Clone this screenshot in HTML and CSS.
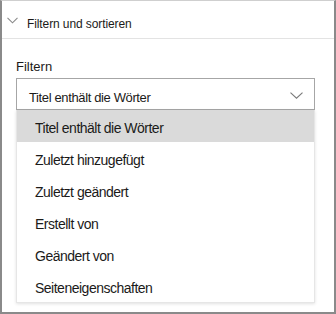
FILE: index.html
```html
<!DOCTYPE html>
<html lang="de">
<head>
  <meta charset="UTF-8" />
  <meta name="viewport" content="width=device-width, initial-scale=1" />
  <title>Filtern und sortieren</title>
  <link rel="stylesheet" href="styles.css">
</head>
<body>
  <div class="panel">
    <div class="panel-header">
      <svg class="header-chevron" width="11" height="7" viewBox="0 0 11 7">
        <path d="M0.5 0.8 L5.5 5.8 L10.5 0.8" fill="none" stroke="#8a8a8a" stroke-width="1.1" />
      </svg>
      <span class="panel-title">Filtern und sortieren</span>
    </div>

    <div class="panel-body">
      <label class="field-label">Filtern</label>
      <div class="dropdown">
        <span class="dropdown-value">Titel enthält die Wörter</span>
        <svg class="dropdown-chevron" width="13" height="7" viewBox="0 0 13 7">
          <path d="M0.5 0.6 L6.5 6.2 L12.5 0.6" fill="none" stroke="#7a7a7a" stroke-width="1.1" />
        </svg>
      </div>
      <ul class="dropdown-list">
        <li class="selected">Titel enthält die Wörter</li>
        <li>Zuletzt hinzugefügt</li>
        <li>Zuletzt geändert</li>
        <li>Erstellt von</li>
        <li>Geändert von</li>
        <li>Seiteneigenschaften</li>
      </ul>
    </div>
  </div>
</body>
</html>
```

FILE: styles.css
```css
body {
  margin: 0;
  font-family: "Liberation Sans", Arial, sans-serif;
  color: #1b1a19;
  background: white;
}
.panel {
  box-sizing: border-box;
  width: 336px;
  height: 314px;
  border: 2px solid #8a8a8a;
  border-top: 1px solid #cfcfcf;
  background: white;
}
.panel-header {
  display: flex;
  align-items: flex-start;
  height: 38px;
  box-sizing: border-box;
  padding: 15px 0 0 5px;
  border-bottom: 1px solid #e3e3e3;
}
.header-chevron {
  margin-top: 1px;
}
.panel-title {
  margin-left: 9px;
  font-size: 12px;
  line-height: 16px;
  letter-spacing: -0.1px;
}
.panel-body {
  padding: 20px 19px 0 14px;
}
.field-label {
  display: block;
  font-size: 13px;
  line-height: 16px;
}
.dropdown {
  display: flex;
  align-items: center;
  justify-content: space-between;
  height: 32px;
  box-sizing: border-box;
  margin-top: 3px;
  padding: 6px 11px 0 12px;
  border: 1px solid #a6a6a6;
}
.dropdown-value {
  font-size: 13px;
  letter-spacing: -0.37px;
}
.dropdown-chevron {
  margin-top: -4px;
}
.dropdown-list {
  list-style: none;
  margin: 0;
  padding: 0;
  border: 1px solid #e6e6e6;
  border-top: none;
  box-shadow: 0 1px 3px rgba(0, 0, 0, 0.12);
}
.dropdown-list li {
  height: 32px;
  box-sizing: border-box;
  padding: 3px 0 0 18px;
  display: flex;
  align-items: center;
  font-size: 14px;
  letter-spacing: -0.5px;
}
.dropdown-list li.selected {
  background: #dadada;
}
```
